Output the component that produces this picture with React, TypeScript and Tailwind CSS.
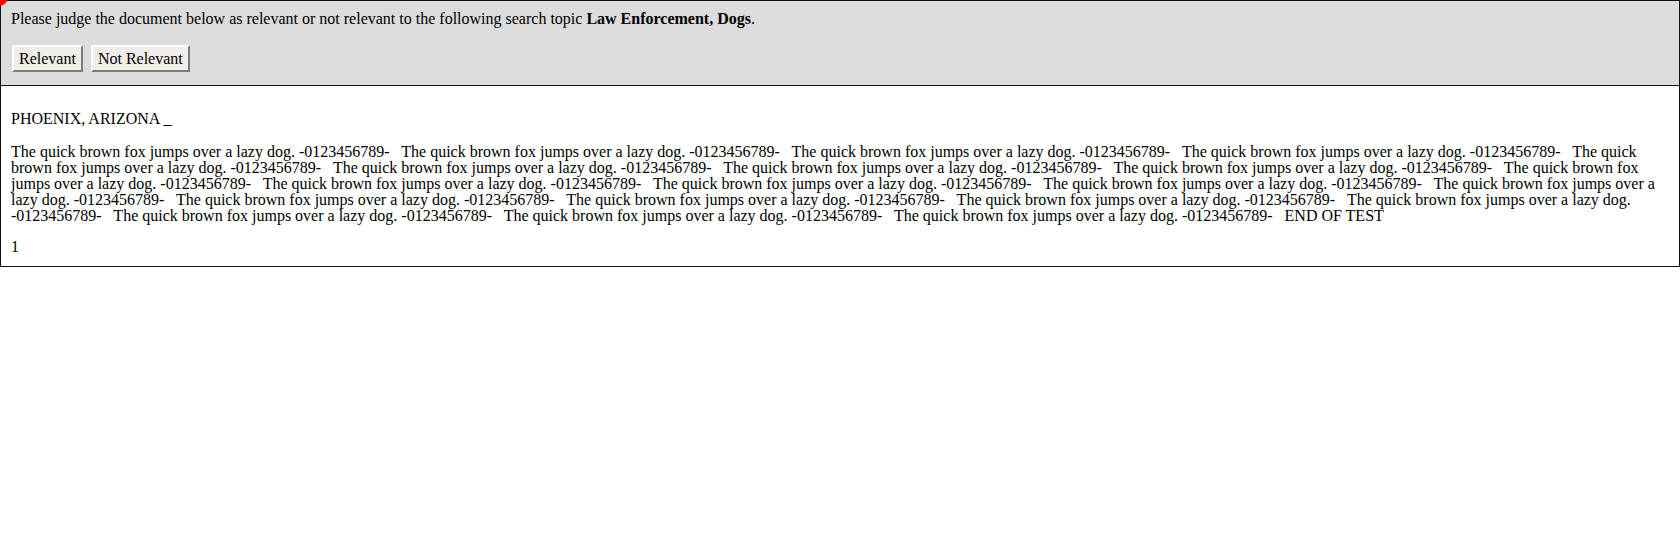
const segment = 'The quick brown fox jumps over a lazy dog. -0123456789-\u00a0\u00a0 ';

export default function App() {
  const body = Array.from({ length: 20 }, () => segment).join('') + 'END OF TEST';

  return (
    <div className="relative font-['Liberation_Serif','Times_New_Roman',serif] text-[16px] leading-4 text-black bg-white min-h-[539px]">
      <div className="absolute -left-[10px] -top-[12px] z-10 h-[18px] w-[18px] rounded-full bg-[#f00]" />

      <div className="border border-[#111] bg-[#dcdcdc] px-[10px] pt-[10px] pb-[13px]">
        <p>
          Please judge the document below as relevant or not relevant to the following search topic{' '}
          <b>Law Enforcement, Dogs</b>.
        </p>
        <div className="mt-[18px] ml-px flex gap-2">
          <button className="border-2 border-t-[#fbfbfb] border-l-[#fbfbfb] border-r-[#7c7c7c] border-b-[#7c7c7c] bg-[#f0ede8] px-[5px] py-[2px] leading-[19px]">
            Relevant
          </button>
          <button className="border-2 border-t-[#fbfbfb] border-l-[#fbfbfb] border-r-[#7c7c7c] border-b-[#7c7c7c] bg-[#f0ede8] px-[5px] py-[2px] leading-[19px]">
            Not Relevant
          </button>
        </div>
      </div>

      <div className="border border-t-0 border-[#111] px-[10px] pt-[25px] pb-[11px]">
        <p>PHOENIX, ARIZONA _</p>
        <p className="mt-[17px]">{body}</p>
        <p className="mt-[15px]">1</p>
      </div>
    </div>
  );
}
